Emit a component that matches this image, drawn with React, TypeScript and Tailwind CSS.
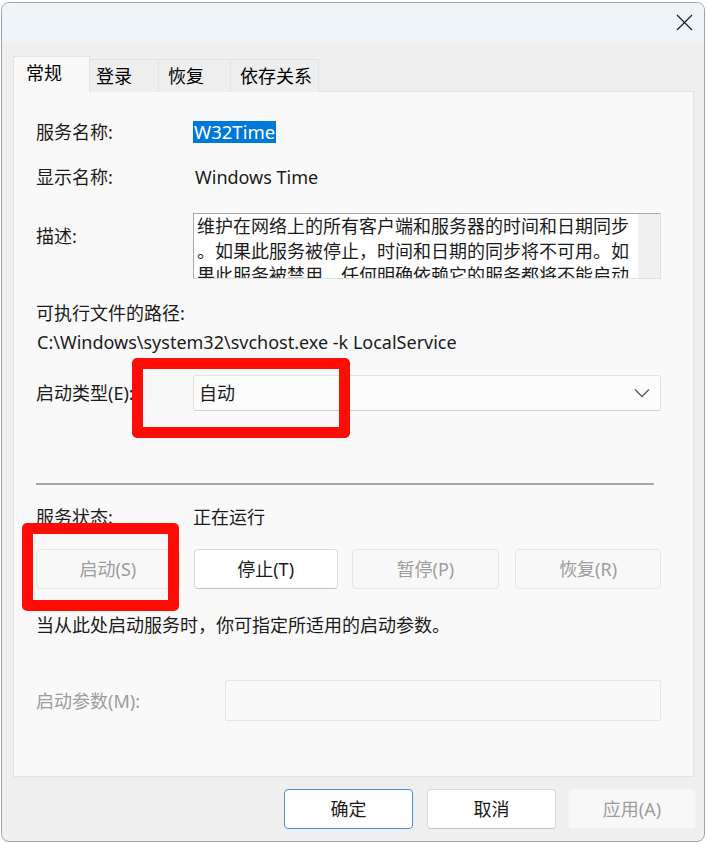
import React from "react";

const FONT = { fontFamily: '"Noto Sans", "Noto Sans CJK SC", sans-serif' };

const ACTIONS = [
  { label: "启动(S)", enabled: false },
  { label: "停止(T)", enabled: true },
  { label: "暂停(P)", enabled: false },
  { label: "恢复(R)", enabled: false },
];

const TABS = ["常规", "登录", "恢复", "依存关系"];

const Label: React.FC<{ children: React.ReactNode; muted?: boolean }> = ({ children, muted }) => (
  <div className={`w-[157px] shrink-0 ${muted ? "text-[#9d9d9d]" : "text-[#1b1b1b]"}`}>{children}</div>
);

const Button: React.FC<{ label: string; enabled?: boolean; focused?: boolean; className?: string }> = ({
  label,
  enabled,
  focused,
  className = "",
}) => (
  <div
    className={`flex items-center justify-center rounded-[4px] border ${
      focused
        ? "border-[#4a90d6] bg-white text-[#1b1b1b]"
        : enabled
          ? "border-[#dadada] border-b-[#c4c4c4] bg-white text-[#1b1b1b]"
          : "border-[#e6e6e6] bg-[#f8f8f8] text-[#9d9d9d]"
    } ${className}`}
  >
    {label}
  </div>
);

export default function App() {
  return (
    <div className="relative w-[707px] h-[844px] bg-white text-[18px] leading-[24px]" style={FONT}>
      <div className="absolute left-[1px] top-[2px] w-[704px] h-[840px] rounded-[8px] border border-[#a3a3a3] overflow-hidden flex flex-col bg-[#efefef]">
        {/* Title bar */}
        <div className="h-[40px] shrink-0 bg-[#eef4f8] flex justify-end items-center pr-[11px]">
          <svg width="17" height="17" viewBox="0 0 17 17" className="mt-[-2px]">
            <path d="M1 1L16 16M16 1L1 16" stroke="#1b1b1b" strokeWidth="1.2" fill="none" />
          </svg>
        </div>

        {/* Tabs */}
        <div className="flex items-end pl-[11px] mt-[13px] h-[36px] relative z-10">
          {TABS.map((t, i) =>
            i === 0 ? (
              <div key={t} className="w-[77px] h-[36px] bg-[#f9f9f9] border border-b-0 border-[#e3e3e3] pl-[12px] pt-[4px]">
                {t}
              </div>
            ) : (
              <div
                key={t}
                className={`h-[33px] bg-[#eeeeee] border border-l-0 border-b-0 border-[#e3e3e3] pt-[4px] ${
                  i === 1 ? "w-[69px] pl-[6px]" : i === 2 ? "w-[72px] pl-[9px]" : "w-[88px] pl-[9px]"
                }`}
              >
                {t}
              </div>
            )
          )}
        </div>

        {/* Panel */}
        <div className="ml-[11px] mr-[10px] mt-[-1px] h-[686px] bg-[#f9f9f9] border border-[#e3e3e3] pl-[22px] pr-[32px] text-[#1b1b1b]">
          <div className="flex items-center mt-[28px]">
            <Label>服务名称:</Label>
            <span className="bg-[#0078d7] text-white px-[1px] h-[22px] leading-[22px] text-[18.5px]">W32Time</span>
          </div>
          <div className="flex items-center mt-[21px]">
            <Label>显示名称:</Label>
            <span className="ml-[2px]">Windows Time</span>
          </div>
          <div className="flex mt-[24px]">
            <div className="pt-[11px]">
              <Label>描述:</Label>
            </div>
            <div className="flex-1 h-[66px] border border-[#a8a8a8] border-r-[#e0e0e0] border-b-[#e0e0e0] bg-white flex overflow-hidden">
              <div className="flex-1 pl-[3px] leading-[24.5px] whitespace-nowrap overflow-hidden">
                <div>维护在网络上的所有客户端和服务器的时间和日期同步</div>
                <div>。如果此服务被停止，时间和日期的同步将不可用。如</div>
                <div>果此服务被禁用，任何明确依赖它的服务都将不能启动</div>
              </div>
              <div className="w-[22px] bg-[#f0f0f0]" />
            </div>
          </div>
          <div className="mt-[22px]">可执行文件的路径:</div>
          <div className="mt-[5px] ml-[1px]">C:\Windows\system32\svchost.exe -k LocalService</div>
          <div className="flex items-center mt-[21px]">
            <Label>启动类型(E):</Label>
            <div className="flex-1 h-[36px] bg-[#fcfcfc] border border-[#e2e2e2] border-b-[#cfcfcf] rounded-[3px] flex items-center justify-between pl-[5px] pr-[10px]">
              <span>自动</span>
              <svg width="16" height="10" viewBox="0 0 16 10">
                <path d="M1 1.5L8 8.5L15 1.5" stroke="#5f5f5f" strokeWidth="1.4" fill="none" />
              </svg>
            </div>
          </div>
          <div className="mt-[72px] h-[2px] bg-[#a8a8a8] mr-[7px]" />
          <div className="flex items-center mt-[20px]">
            <Label>服务状态:</Label>
            <span>正在运行</span>
          </div>
          <div className="flex gap-[14px] mt-[20px]">
            {ACTIONS.map((a, i) => (
              <Button
                key={a.label}
                label={a.label}
                enabled={a.enabled}
                className={`h-[40px] ${i === 2 ? "w-[148px]" : i === 3 ? "w-[146px] ml-[2px]" : "w-[144px]"}`}
              />
            ))}
          </div>
          <div className="mt-[24px]">当从此处启动服务时，你可指定所适用的启动参数。</div>
          <div className="flex items-center mt-[43px]">
            <div className="w-[189px] shrink-0 text-[#9d9d9d]">启动参数(M):</div>
            <div className="flex-1 h-[41px] bg-[#f9f9f9] border border-[#e6e6e6] rounded-[2px]" />
          </div>
        </div>

        {/* Dialog buttons */}
        <div className="flex justify-end pr-[8px] mt-[12px]">
          <Button label="确定" focused className="w-[129px] h-[40px]" />
          <Button label="取消" enabled className="w-[129px] h-[40px] ml-[14px]" />
          <Button label="应用(A)" className="w-[128px] h-[40px] ml-[12px] border-[#f3f3f3]" />
        </div>
      </div>

      {/* Red annotation boxes */}
      <div className="absolute left-[132px] top-[358px] w-[218px] h-[80px] border-[11px] border-[#fd0d05] rounded-[5px]" />
      <div className="absolute left-[22px] top-[523px] w-[157px] h-[88px] border-[11px] border-[#fd0d05] rounded-[5px]" />
    </div>
  );
}
